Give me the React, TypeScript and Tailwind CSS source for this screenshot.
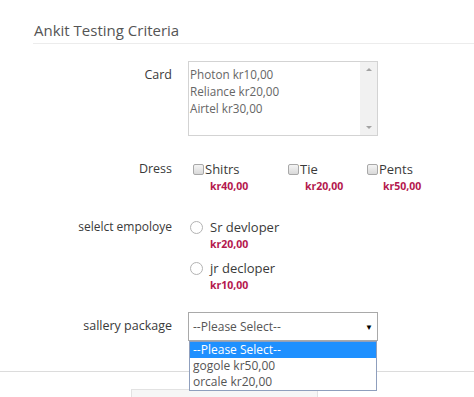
import React from "react";

function Checkbox() {
  return (
    <span className="inline-block w-[11px] h-[11px] border border-[#a8a8a8] rounded-[2px] bg-gradient-to-b from-[#f4f4f4] to-[#d9d9d9] mr-[1px] shrink-0" />
  );
}

function Radio() {
  return (
    <span className="inline-block w-[13px] h-[13px] border border-[#b3b3b3] rounded-full bg-white shrink-0" />
  );
}

const price = "text-[10.5px] leading-[16px] font-bold text-[#b4184e]";

export default function App() {
  return (
    <div className="w-[474px] h-[397px] overflow-hidden bg-white font-['Open_Sans',sans-serif] text-[#3a3a3a]">
      <div className="pl-[33px] pt-[19px]">
        <div className="text-[15px] leading-[22px] text-[#555] pl-[1px] pb-[2px] border-b border-[#ececec]">
          Ankit Testing Criteria
        </div>
      </div>

      {/* Card */}
      <div className="flex mt-[17px]">
        <div className="w-[172px] text-right text-[12.5px] leading-[18px] pt-[5px]">Card</div>
        <div className="ml-[16px] w-[190px] h-[75px] border border-[#d3d3d3] flex">
          <div className="flex-1 pl-[1px] pt-[4px] text-[11.7px] leading-[17px] text-[#666]">
            <div>Photon kr10,00</div>
            <div>Reliance kr20,00</div>
            <div>Airtel kr30,00</div>
          </div>
          <div className="w-[17px] bg-[#f1f1f1] flex flex-col items-center justify-between py-[6px]">
            <span className="w-0 h-0 border-l-[3px] border-r-[3px] border-b-[3px] border-l-transparent border-r-transparent border-b-[#a3a3a3]" />
            <span className="w-0 h-0 border-l-[3px] border-r-[3px] border-t-[3px] border-l-transparent border-r-transparent border-t-[#a3a3a3]" />
          </div>
        </div>
      </div>

      {/* Dress */}
      <div className="flex mt-[24px]">
        <div className="w-[172px] text-right text-[12.5px] leading-[18px]">Dress</div>
        <div className="ml-[21px] flex">
          <div className="w-[95px]">
            <div className="flex items-center text-[13px] leading-[18px]"><Checkbox />Shitrs</div>
            <div className={`${price} pl-[17px]`}>kr40,00</div>
          </div>
          <div className="w-[79px]">
            <div className="flex items-center text-[13px] leading-[18px]"><Checkbox />Tie</div>
            <div className={`${price} pl-[17px]`}>kr20,00</div>
          </div>
          <div>
            <div className="flex items-center text-[13px] leading-[18px]"><Checkbox />Pents</div>
            <div className={`${price} pl-[16px]`}>kr50,00</div>
          </div>
        </div>
      </div>

      {/* Employee */}
      <div className="flex mt-[24px]">
        <div className="w-[172px] text-right text-[12px] leading-[18px]">selelct empoloye</div>
        <div className="ml-[18px]">
          <div className="flex items-center text-[13px] leading-[18px]">
            <Radio />
            <span className="ml-[7px]">Sr devloper</span>
          </div>
          <div className={`${price} pl-[20px]`}>kr20,00</div>
          <div className="flex items-center text-[13px] leading-[18px] mt-[7px]">
            <Radio />
            <span className="ml-[7px]">jr decloper</span>
          </div>
          <div className={`${price} pl-[20px]`}>kr10,00</div>
        </div>
      </div>

      {/* Select */}
      <div className="flex mt-[19px]">
        <div className="w-[172px] text-right text-[12.5px] leading-[18px] pt-[5px]">sallery package</div>
        <div className="ml-[16px] relative w-[190px]">
          <div className="h-[29px] border border-[#a9a9a9] flex items-center justify-between pl-[4px] pr-[4px] text-[12px] text-[#555]">
            <span>--Please Select--</span>
            <span className="text-[8px] text-black">▼</span>
          </div>
          <div className="absolute left-[1px] top-full w-[188px] border border-[#8f9fbd] bg-white text-[12px] leading-[16px] z-10">
            <div className="bg-[#1e90ff] text-white pl-[3px]">--Please Select--</div>
            <div className="text-[#555] pl-[3px]">gogole kr50,00</div>
            <div className="text-[#555] pl-[3px]">orcale kr20,00</div>
          </div>
        </div>
      </div>

      <div className="mt-[30px] border-t border-[#dcdcdc]" />
      <div className="mt-[17px] ml-[131px] w-[187px] h-[20px] bg-[#f6f6f6] border border-[#e2e2e2]" />
    </div>
  );
}
